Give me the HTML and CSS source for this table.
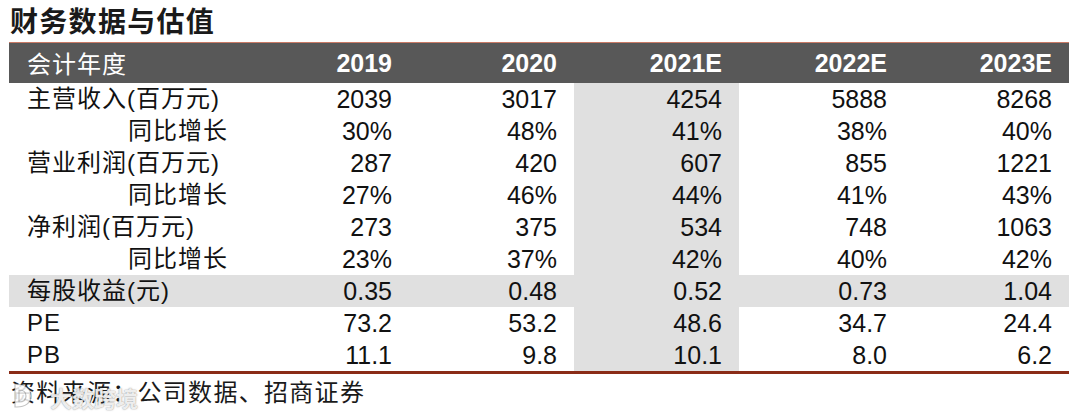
FILE: index.html
```html
<!DOCTYPE html>
<html lang="zh-CN">
<head>
<meta charset="utf-8">
<title>财务数据与估值</title>
<link rel="stylesheet" href="styles.css">
</head>
<body>
<div class="page">
  <h1 class="title">财务数据与估值</h1>
  <table class="fin">
    <colgroup>
      <col class="c-label">
      <col class="c-num"><col class="c-num"><col class="c-num"><col class="c-num"><col class="c-num">
    </colgroup>
    <thead>
      <tr>
        <th class="label">会计年度</th>
        <th>2019</th><th>2020</th><th>2021E</th><th>2022E</th><th>2023E</th>
      </tr>
    </thead>
    <tbody>
      <tr><td class="label">主营收入(百万元)</td><td>2039</td><td>3017</td><td class="hl">4254</td><td>5888</td><td>8268</td></tr>
      <tr><td class="label sub">同比增长</td><td>30%</td><td>48%</td><td class="hl">41%</td><td>38%</td><td>40%</td></tr>
      <tr><td class="label">营业利润(百万元)</td><td>287</td><td>420</td><td class="hl">607</td><td>855</td><td>1221</td></tr>
      <tr><td class="label sub">同比增长</td><td>27%</td><td>46%</td><td class="hl">44%</td><td>41%</td><td>43%</td></tr>
      <tr><td class="label">净利润(百万元)</td><td>273</td><td>375</td><td class="hl">534</td><td>748</td><td>1063</td></tr>
      <tr><td class="label sub">同比增长</td><td>23%</td><td>37%</td><td class="hl">42%</td><td>40%</td><td>42%</td></tr>
      <tr class="grey"><td class="label">每股收益(元)</td><td>0.35</td><td>0.48</td><td class="hl">0.52</td><td>0.73</td><td>1.04</td></tr>
      <tr><td class="label">PE</td><td>73.2</td><td>53.2</td><td class="hl">48.6</td><td>34.7</td><td>24.4</td></tr>
      <tr><td class="label">PB</td><td>11.1</td><td>9.8</td><td class="hl">10.1</td><td>8.0</td><td>6.2</td></tr>
    </tbody>
  </table>
  <p class="source">资料来源：公司数据、招商证券</p>
  <svg class="wm-icon" width="22" height="28" viewBox="0 0 22 28">
    <path d="M4 3 C14 3 20 8 20 15 C20 22 14 26 6 26 L4 26 Z" fill="rgba(255,255,255,0.85)" stroke="rgba(120,120,120,0.45)" stroke-width="1.2"/>
    <path d="M8 9 C13 9 15 12 15 15 C15 18 13 21 8 21 Z" fill="none" stroke="rgba(120,120,120,0.45)" stroke-width="1.2"/>
  </svg>
  <span class="wm-text">大数跨境</span>
</div>
</body>
</html>
```

FILE: styles.css
```css
* { box-sizing: border-box; }

html, body {
  margin: 0;
  padding: 0;
  background: #ffffff;
}

body {
  font-family: "Liberation Sans", "Noto Sans CJK SC", Arial, sans-serif;
  color: #111111;
}

.page {
  position: relative;
  width: 1080px;
  height: 418px;
  overflow: hidden;
}

.title {
  margin: 0;
  height: 42px;
  padding-left: 10px;
  font-family: "Noto Sans CJK SC", sans-serif;
  font-size: 28px;
  font-weight: 700;
  letter-spacing: 1.3px;
  line-height: 40px;
  color: #1a1a1a;
}

.fin {
  margin-left: 9px;
  width: 1060px;
  border-collapse: collapse;
  table-layout: fixed;
  font-size: 25px;
  border-bottom: 3px solid #8a2c17;
}

.c-label { width: 235px; }
.c-num { width: 165px; }

.fin thead tr {
  background: #585858;
  border-top: 1px solid #c97a66;
}

.fin th {
  height: 40px;
  padding: 0 17px 0 0;
  text-align: right;
  color: #ffffff;
  font-weight: 700;
  font-size: 25px;
  line-height: 40px;
}

.fin th.label {
  text-align: left;
  padding-left: 18px;
  font-family: "Noto Sans CJK SC", sans-serif;
  font-weight: 400;
  font-size: 24px;
  letter-spacing: 1px;
}

.fin td {
  height: 32px;
  padding: 0 17px 0 0;
  text-align: right;
  line-height: 32px;
  white-space: nowrap;
}

.fin td.label {
  text-align: left;
  padding-left: 18px;
  font-size: 24px;
  letter-spacing: 1px;
}

.fin td.sub {
  padding-left: 119px;
}

.fin td.hl {
  background: #e0e0e0;
}

.fin tr.grey td {
  background: #e0e0e0;
}

.source {
  margin: 0;
  height: 33px;
  padding-left: 11px;
  font-family: "Noto Sans CJK SC", sans-serif;
  font-size: 24px;
  letter-spacing: 1.3px;
  line-height: 33px;
  color: #1a1a1a;
}

.wm-icon {
  position: absolute;
  left: 11px;
  top: 381px;
}

.wm-text {
  position: absolute;
  left: 50px;
  top: 383px;
  font-family: "Noto Sans CJK SC", sans-serif;
  font-size: 22px;
  font-weight: 700;
  color: rgba(255, 255, 255, 0.85);
  text-shadow: 0 0 1px rgba(90, 90, 90, 0.55), 0 0 2px rgba(90, 90, 90, 0.35);
  line-height: 28px;
}
```
